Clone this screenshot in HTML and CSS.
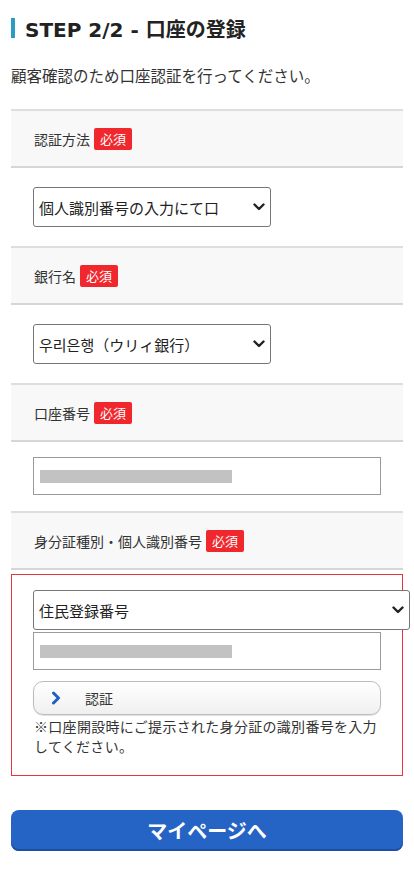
FILE: index.html
```
<!DOCTYPE html>
<html lang="ja">
<head>
<meta charset="utf-8">
<meta name="viewport" content="width=device-width, initial-scale=1">
<title>STEP 2/2 - 口座の登録</title>
<link rel="stylesheet" href="styles.css">
</head>
<body>
<h1 class="title"><span class="title-bar"></span>STEP 2/2 - 口座の登録</h1>
<p class="lead">顧客確認のため口座認証を行ってください。</p>

<div class="form">
  <div class="field-label">認証方法<span class="badge">必須</span></div>
  <div class="field-body">
    <div class="select-wrap narrow">
      <select class="select clip"><option>個人識別番号の入力にて口座認証</option></select>
      <svg class="chev" width="12" height="8" viewBox="0 0 12 8"><path d="M1.5 1.5 L6 6 L10.5 1.5" fill="none" stroke="#222" stroke-width="2.4" stroke-linecap="round" stroke-linejoin="round"/></svg>
    </div>
  </div>

  <div class="field-label">銀行名<span class="badge">必須</span></div>
  <div class="field-body">
    <div class="select-wrap narrow">
      <select class="select"><option>우리은행（ウリィ銀行）</option></select>
      <svg class="chev" width="12" height="8" viewBox="0 0 12 8"><path d="M1.5 1.5 L6 6 L10.5 1.5" fill="none" stroke="#222" stroke-width="2.4" stroke-linecap="round" stroke-linejoin="round"/></svg>
    </div>
  </div>

  <div class="field-label">口座番号<span class="badge">必須</span></div>
  <div class="field-body input-body">
    <div class="input"><span class="redact"></span></div>
  </div>

  <div class="field-label">身分証種別・個人識別番号<span class="badge">必須</span></div>
  <div class="error-box">
    <div class="select-wrap wide">
      <select class="select"><option>住民登録番号</option></select>
      <svg class="chev" width="12" height="8" viewBox="0 0 12 8"><path d="M1.5 1.5 L6 6 L10.5 1.5" fill="none" stroke="#222" stroke-width="2.4" stroke-linecap="round" stroke-linejoin="round"/></svg>
    </div>
    <div class="input input-tight"><span class="redact"></span></div>
    <button class="auth-btn" type="button">
      <svg class="auth-chev" width="10" height="14" viewBox="0 0 10 14"><path d="M2.5 2 L7.5 7 L2.5 12" fill="none" stroke="#1f5fc4" stroke-width="3" stroke-linecap="round" stroke-linejoin="round"/></svg>
      <span class="auth-text">認証</span>
    </button>
    <p class="note">※口座開設時にご提示された身分証の識別番号を入力してください。</p>
  </div>
</div>

<button class="primary-btn" type="button">マイページへ</button>
</body>
</html>
```
FILE: styles.css
```
* { box-sizing: border-box; }

body {
  margin: 0;
  padding: 0 11px;
  background: #fff;
  color: #333;
  font-family: "Noto Sans CJK JP", "Noto Sans", sans-serif;
}

.title {
  display: flex;
  align-items: center;
  gap: 10px;
  margin: 16px 0 0;
  height: 24px;
  font-family: "DejaVu Sans", "Noto Sans CJK JP", sans-serif;
  font-size: 20px;
  font-weight: bold;
  color: #222;
}

.title-bar {
  display: block;
  width: 4px;
  height: 20px;
  background: #2a9dc2;
}

.lead {
  margin: 25px 0 24px;
  font-size: 15.5px;
  line-height: 20px;
  color: #333;
}

.form {
  display: flex;
  flex-direction: column;
}

.field-label {
  display: flex;
  align-items: center;
  gap: 4px;
  height: 59px;
  padding-left: 23px;
  background: #f8f8f8;
  border-top: 2px solid #dedede;
  border-bottom: 2px solid #d6d6d6;
  font-size: 14px;
  color: #333;
}

.badge {
  display: inline-block;
  height: 22px;
  line-height: 22px;
  padding: 0 6px;
  background: #f0282d;
  color: #fff;
  border-radius: 2px;
  font-size: 13px;
}

.field-body {
  padding: 19px 22px;
}

.input-body {
  padding: 15px 22px 16px;
}

.select-wrap {
  position: relative;
  height: 40px;
}

.select-wrap.narrow { width: 238px; }
.select-wrap.wide { width: 377px; }

.select {
  display: block;
  width: 100%;
  height: 40px;
  margin: 0;
  padding: 0 30px 0 5px;
  -webkit-appearance: none;
  appearance: none;
  background: #fff;
  border: 1px solid #767676;
  border-radius: 3px;
  font-family: "Noto Sans CJK JP", sans-serif;
  font-size: 15px;
  color: #222;
  overflow: hidden;
  white-space: nowrap;
}

.select.clip {
  padding-right: 52px;
}

.chev {
  position: absolute;
  right: 6px;
  top: 16px;
}

.input {
  display: flex;
  align-items: center;
  width: 348px;
  height: 38px;
  padding: 0 6px;
  border: 1px solid #9a9a9a;
  background: #fff;
}

.redact {
  display: block;
  width: 192px;
  height: 13px;
  background: #c2c2c2;
}

.error-box {
  margin-top: 4px;
  padding: 15px 21px 19px;
  border: 1px solid #e8353b;
  display: flex;
  flex-direction: column;
}

.input-tight {
  margin-top: 2px;
}

.auth-btn {
  display: flex;
  align-items: center;
  width: 348px;
  height: 34px;
  margin-top: 11px;
  padding: 0 0 0 17px;
  border: 1px solid #bcbcbc;
  border-radius: 10px;
  background: linear-gradient(#ffffff, #f0f0f0);
  box-shadow: 0 1px 1px rgba(0, 0, 0, 0.12);
  font-family: "Noto Sans CJK JP", sans-serif;
  font-size: 14px;
  color: #333;
  cursor: pointer;
}

.auth-text {
  margin-left: 24px;
}

.note {
  margin: 1px 0 0;
  padding-left: 1px;
  font-size: 14px;
  line-height: 20px;
  letter-spacing: 0.3px;
  color: #333;
}

.primary-btn {
  display: block;
  width: 100%;
  height: 41px;
  margin: 34px 0 0;
  border: none;
  border-radius: 8px;
  background: #2563c5;
  box-shadow: inset 0 -2px 0 #1b4fa3;
  color: #fff;
  font-family: "Noto Sans CJK JP", sans-serif;
  font-size: 20px;
  font-weight: bold;
  cursor: pointer;
}
```
